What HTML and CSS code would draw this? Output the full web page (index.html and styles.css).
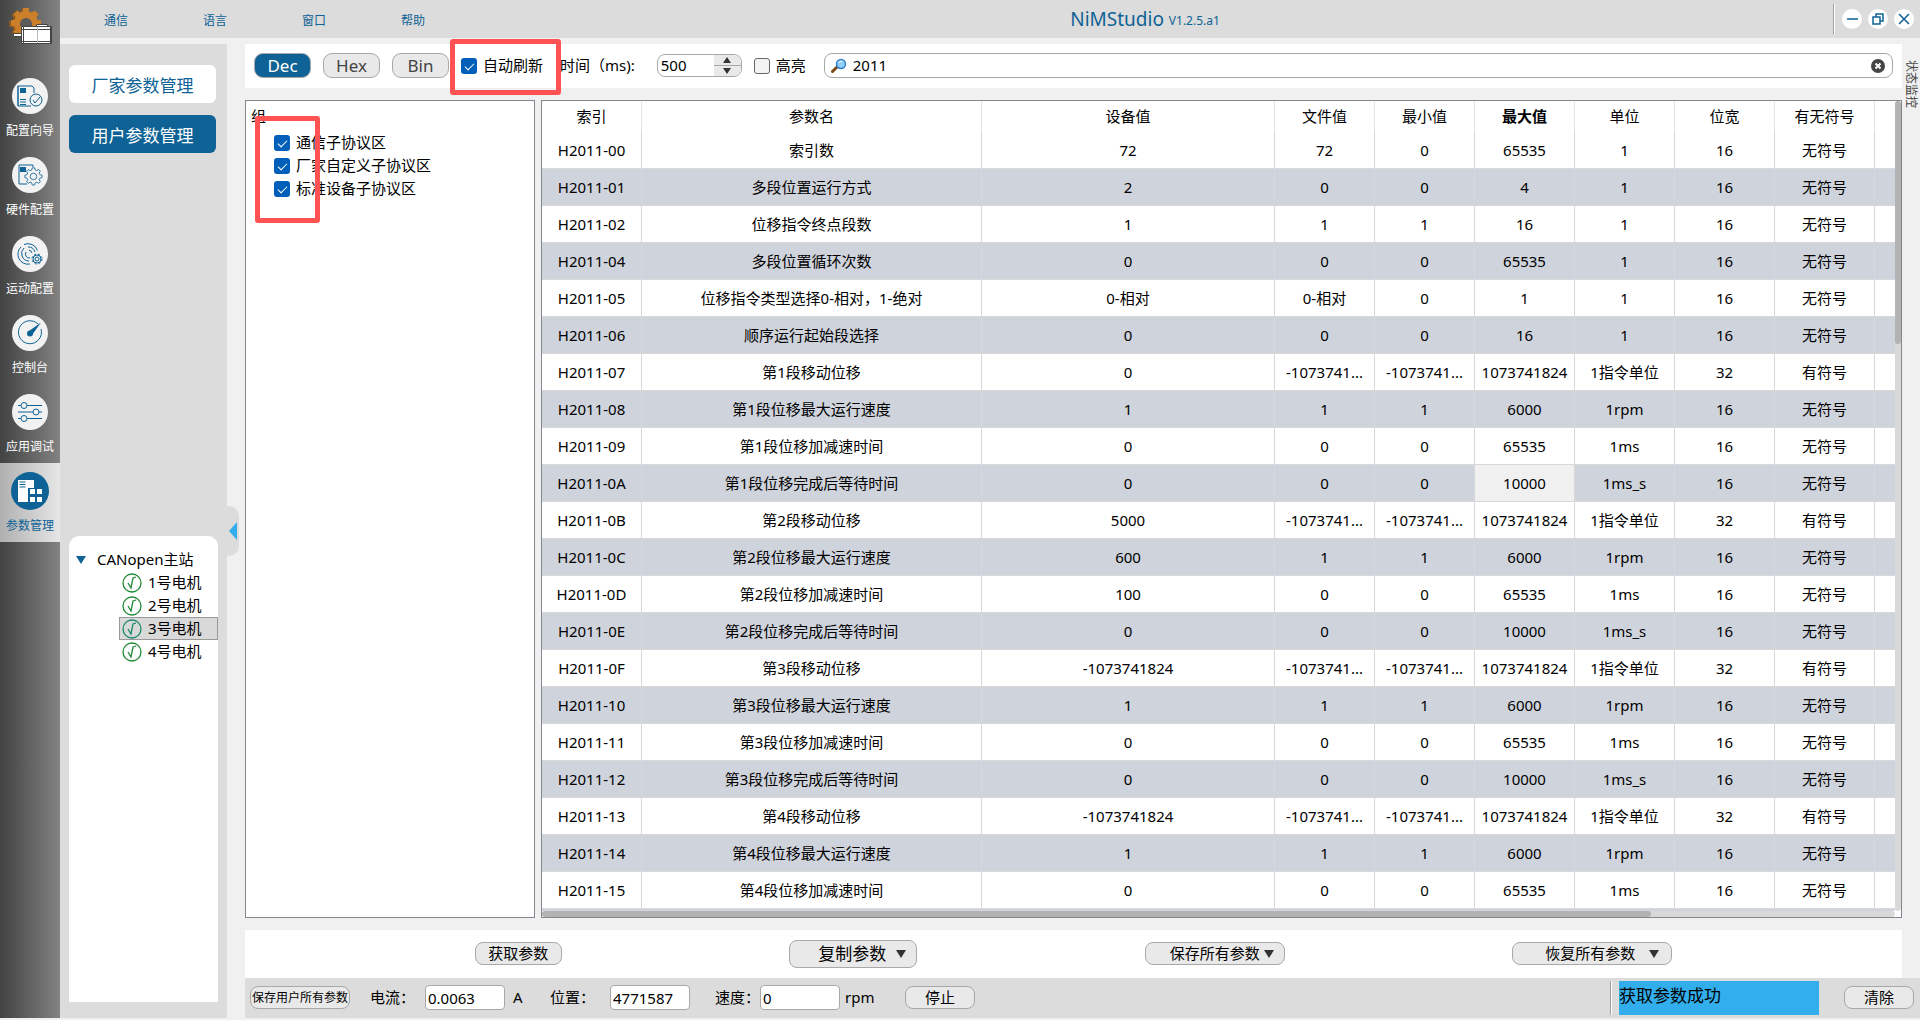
FILE: index.html
```html
<!DOCTYPE html>
<html lang="zh-CN">
<head>
    <meta charset="UTF-8">
    <meta name="viewport" content="width=device-width, initial-scale=1.0">
    <title>NiMStudio</title>
    <link rel="stylesheet" href="styles.css">
</head>
<body>
    <!-- Sidebar -->
    <nav class="sidebar">
        <svg class="logo" viewBox="0 0 46 40">
            <g fill="#8f5a1c" transform="translate(-2 1)">
                <circle cx="18" cy="15" r="12"/>
                <path d="M15 0h6v30h-6zM3 12h30v6H3z"/>
                <path d="M15 0h6v30h-6zM3 12h30v6H3z" transform="rotate(45 18 15)"/>
            </g>
            <g fill="#cb7f2b">
                <circle cx="18" cy="15" r="12"/>
                <path d="M15 0h6v30h-6zM3 12h30v6H3z"/>
                <path d="M15 0h6v30h-6zM3 12h30v6H3z" transform="rotate(45 18 15)"/>
            </g>
            <circle cx="18" cy="16" r="6" fill="#5a5a5a"/>
            <g fill="#fff" stroke="#444">
                <path d="M5.500 25.500h8v3h-8zM28.500 16.500h11v2h-11z"/>
                <path d="M13.500 18.500h30v17h-30z"/>
                <path d="M15.500 18.500v17M42.500 18.500v17M13.500 21.500h30M13.500 33.500h30" fill="none"/>
                <path d="M29.500 19v16" fill="none" stroke="#bbb"/>
            </g>
        </svg>
        <a class="nav-item" href="#">
            <svg viewBox="0 0 38 38">
                <circle class="disc" cx="19" cy="19" r="18"/>
                <path d="M23 16v-5l-2-2H7v20h13M7 9v20"/>
                <path class="solid" d="M9 11h6v5H9z"/>
                <path d="M9 22.500h6M9 25h6M9 27.500h6"/>
                <circle cx="25" cy="23" r="6"/>
                <path d="M22 23l2 3 5-6"/>
            </svg>
            <span>配置向导</span>
        </a>
        <a class="nav-item" href="#">
            <svg viewBox="0 0 38 38">
                <circle class="disc" cx="19" cy="19" r="18"/>
                <path d="M22 11V9H8v19h8"/>
                <path class="solid" d="M9 11h6v5H9z"/>
                <g transform="translate(4 2) scale(.82)">
                    <path class="gear" d="M21 12h3l.6 2.600 2 .8 2.300-1.400 2 2-1.400 2.300.8 2 2.700.7v3l-2.700.6-.8 2 1.400 2.300-2 2-2.300-1.400-2 .8L24 33h-3l-.6-2.700-2-.8-2.300 1.400-2-2 1.400-2.300-.8-2L12 24v-3l2.700-.7.8-2-1.400-2.300 2-2 2.300 1.400 2-.8z"/>
                    <circle cx="22.500" cy="22.500" r="4"/>
                </g>
            </svg>
            <span>硬件配置</span>
        </a>
        <a class="nav-item" href="#">
            <svg viewBox="0 0 38 38">
                <circle class="disc" cx="19" cy="19" r="18"/>
                <path d="M13 9.500a10 10 0 0 1 13.500 6M10 12a10 10 0 0 0 9 17M17 12a7 7 0 0 1 7 5M13 13a7.500 7.500 0 0 0 5 13M18 15a4 4 0 0 1 3 3M15 17a4 4 0 0 0 4 6"/>
                <circle cx="26" cy="24" r="5" stroke-dasharray="2 2"/>
                <circle cx="26" cy="24" r="4"/>
                <circle cx="26" cy="24" r="2"/>
            </svg>
            <span>运动配置</span>
        </a>
        <a class="nav-item" href="#">
            <svg viewBox="0 0 38 38">
                <circle class="disc" cx="19" cy="19" r="18"/>
                <path d="M27 10a11.500 11.500 0 1 0 3 5"/>
                <circle class="solid" cx="19" cy="19.500" r="3"/>
                <path class="solid" d="M18 17L30 8.500 21 21z"/>
            </svg>
            <span>控制台</span>
        </a>
        <a class="nav-item" href="#">
            <svg viewBox="0 0 38 38">
                <circle class="disc" cx="19" cy="19" r="18"/>
                <path d="M7 12.500h3M16 12.500h15M7 19h15M28 19h3M7 25.500h3M16 25.500h15"/>
                <circle cx="13" cy="12.500" r="3"/>
                <circle cx="25" cy="19" r="3"/>
                <circle cx="13" cy="25.500" r="3"/>
            </svg>
            <span>应用调试</span>
        </a>
        <a class="nav-item active" href="#">
            <svg viewBox="0 0 38 38">
                <circle class="disc" cx="19" cy="19" r="19"/>
                <path class="white" d="M7 8h16v8h-6v14H7z"/>
                <path d="M8.500 10h6M8.500 12.500h6M8.500 15h6"/>
                <path class="white" d="M19 17h5v5h-5zM26 17h5v5h-5zM19 25h5v5h-5zM26 25h5v5h-5z"/>
            </svg>
            <span>参数管理</span>
        </a>
    </nav>

    <div class="app">
        <!-- Title bar -->
        <header class="topbar">
            <div class="menu">
                <a href="#">通信</a>
                <a href="#">语言</a>
                <a href="#">窗口</a>
                <a href="#">帮助</a>
            </div>
            <h1>NiMStudio <small>V1.2.5.a1</small></h1>
            <div class="window-buttons">
                <button type="button" aria-label="最小化"><svg viewBox="0 0 20 20"><path d="M5 10h11"/></svg></button>
                <button type="button" aria-label="还原"><svg viewBox="0 0 20 20"><path d="M5 8h7v7H5zM8 8V5h7v7h-3"/></svg></button>
                <button type="button" aria-label="关闭"><svg viewBox="0 0 20 20"><path d="M5 5l10 10M15 5L5 15"/></svg></button>
            </div>
        </header>

        <div class="workspace">
            <aside class="side-panel">
                <button type="button" class="page-button">厂家参数管理</button>
                <button type="button" class="page-button selected">用户参数管理</button>
                <div class="device-tree">
                    <div class="tree-root"><span class="arrow-down"></span>CANopen主站</div>
                    <ul>
                        <li><svg viewBox="0 0 20 20"><circle cx="10" cy="10" r="9"/><path d="M6 10l3 5 2-10 3-1"/></svg>1号电机</li>
                        <li><svg viewBox="0 0 20 20"><circle cx="10" cy="10" r="9"/><path d="M6 10l3 5 2-10 3-1"/></svg>2号电机</li>
                        <li class="current"><svg viewBox="0 0 20 20"><circle cx="10" cy="10" r="9"/><path d="M6 10l3 5 2-10 3-1"/></svg>3号电机</li>
                        <li><svg viewBox="0 0 20 20"><circle cx="10" cy="10" r="9"/><path d="M6 10l3 5 2-10 3-1"/></svg>4号电机</li>
                    </ul>
                </div>
            </aside>
            <div class="splitter">
                <button type="button" class="collapse" aria-label="收起"></button>
            </div>

            <div class="content">
                <main class="main">
                    <form class="toolbar">
                        <button type="button" class="pill selected">Dec</button>
                        <button type="button" class="pill">Hex</button>
                        <button type="button" class="pill">Bin</button>
                        <label class="check auto"><input type="checkbox" checked>自动刷新<span class="mark mark-auto"></span></label>
                        <label class="interval" for="interval">时间（ms):</label>
                        <span class="spin">
                            <input type="text" id="interval" value="500">
                            <span class="spin-buttons">
                                <button type="button" aria-label="增加"><i class="arrow-up"></i></button>
                                <button type="button" aria-label="减少"><i class="arrow-down"></i></button>
                            </span>
                        </span>
                        <label class="check"><input type="checkbox">高亮</label>
                        <span class="search">
                            <svg viewBox="0 0 16 16">
                                <path d="M6 9l-4.500 4.500" stroke="#7b4a16" stroke-width="3" stroke-linecap="round"/>
                                <circle cx="10" cy="6" r="4.500" fill="#8fd0fb" stroke="#2f7fcb" stroke-width="1.500"/>
                                <path d="M7.500 5a3 3 0 0 1 4-1.500" stroke="#fff" fill="none"/>
                            </svg>
                            <input type="text" value="2011" aria-label="搜索">
                            <button type="button" aria-label="清空"><svg viewBox="0 0 14 14"><circle cx="7" cy="7" r="7" fill="#444"/><path d="M4.500 4.500l5 5M9.500 4.500l-5 5" stroke="#fff" stroke-width="2"/></svg></button>
                        </span>
                    </form>

                    <div class="panels">
                        <section class="groups">
                            <h2>组</h2>
                            <label class="check"><input type="checkbox" checked>通信子协议区</label>
                            <label class="check"><input type="checkbox" checked>厂家自定义子协议区</label>
                            <label class="check"><input type="checkbox" checked>标准设备子协议区</label>
                            <span class="mark mark-groups"></span>
                        </section>

                        <section class="params">
                            <div class="table-view">
                                <table>
                                    <colgroup>
                                        <col class="c-index"><col class="c-name"><col><col class="c-num"><col class="c-num"><col class="c-num"><col class="c-num"><col class="c-num"><col class="c-num"><col class="c-rest">
                                    </colgroup>
                                    <thead>
                                        <tr><th>索引</th><th>参数名</th><th>设备值</th><th>文件值</th><th>最小值</th><th class="sorted">最大值</th><th>单位</th><th>位宽</th><th>有无符号</th><th></th></tr>
                                    </thead>
                                    <tbody>
                                        <tr><td>H2011-00</td><td>索引数</td><td>72</td><td>72</td><td>0</td><td>65535</td><td>1</td><td>16</td><td>无符号</td><td></td></tr>
                                        <tr><td>H2011-01</td><td>多段位置运行方式</td><td>2</td><td>0</td><td>0</td><td>4</td><td>1</td><td>16</td><td>无符号</td><td></td></tr>
                                        <tr><td>H2011-02</td><td>位移指令终点段数</td><td>1</td><td>1</td><td>1</td><td>16</td><td>1</td><td>16</td><td>无符号</td><td></td></tr>
                                        <tr><td>H2011-04</td><td>多段位置循环次数</td><td>0</td><td>0</td><td>0</td><td>65535</td><td>1</td><td>16</td><td>无符号</td><td></td></tr>
                                        <tr><td>H2011-05</td><td>位移指令类型选择0-相对，1-绝对</td><td>0-相对</td><td>0-相对</td><td>0</td><td>1</td><td>1</td><td>16</td><td>无符号</td><td></td></tr>
                                        <tr><td>H2011-06</td><td>顺序运行起始段选择</td><td>0</td><td>0</td><td>0</td><td>16</td><td>1</td><td>16</td><td>无符号</td><td></td></tr>
                                        <tr><td>H2011-07</td><td>第1段移动位移</td><td>0</td><td>-1073741...</td><td>-1073741...</td><td>1073741824</td><td>1指令单位</td><td>32</td><td>有符号</td><td></td></tr>
                                        <tr><td>H2011-08</td><td>第1段位移最大运行速度</td><td>1</td><td>1</td><td>1</td><td>6000</td><td>1rpm</td><td>16</td><td>无符号</td><td></td></tr>
                                        <tr><td>H2011-09</td><td>第1段位移加减速时间</td><td>0</td><td>0</td><td>0</td><td>65535</td><td>1ms</td><td>16</td><td>无符号</td><td></td></tr>
                                        <tr><td>H2011-0A</td><td>第1段位移完成后等待时间</td><td>0</td><td>0</td><td>0</td><td class="focus">10000</td><td>1ms_s</td><td>16</td><td>无符号</td><td></td></tr>
                                        <tr><td>H2011-0B</td><td>第2段移动位移</td><td>5000</td><td>-1073741...</td><td>-1073741...</td><td>1073741824</td><td>1指令单位</td><td>32</td><td>有符号</td><td></td></tr>
                                        <tr><td>H2011-0C</td><td>第2段位移最大运行速度</td><td>600</td><td>1</td><td>1</td><td>6000</td><td>1rpm</td><td>16</td><td>无符号</td><td></td></tr>
                                        <tr><td>H2011-0D</td><td>第2段位移加减速时间</td><td>100</td><td>0</td><td>0</td><td>65535</td><td>1ms</td><td>16</td><td>无符号</td><td></td></tr>
                                        <tr><td>H2011-0E</td><td>第2段位移完成后等待时间</td><td>0</td><td>0</td><td>0</td><td>10000</td><td>1ms_s</td><td>16</td><td>无符号</td><td></td></tr>
                                        <tr><td>H2011-0F</td><td>第3段移动位移</td><td>-1073741824</td><td>-1073741...</td><td>-1073741...</td><td>1073741824</td><td>1指令单位</td><td>32</td><td>有符号</td><td></td></tr>
                                        <tr><td>H2011-10</td><td>第3段位移最大运行速度</td><td>1</td><td>1</td><td>1</td><td>6000</td><td>1rpm</td><td>16</td><td>无符号</td><td></td></tr>
                                        <tr><td>H2011-11</td><td>第3段位移加减速时间</td><td>0</td><td>0</td><td>0</td><td>65535</td><td>1ms</td><td>16</td><td>无符号</td><td></td></tr>
                                        <tr><td>H2011-12</td><td>第3段位移完成后等待时间</td><td>0</td><td>0</td><td>0</td><td>10000</td><td>1ms_s</td><td>16</td><td>无符号</td><td></td></tr>
                                        <tr><td>H2011-13</td><td>第4段移动位移</td><td>-1073741824</td><td>-1073741...</td><td>-1073741...</td><td>1073741824</td><td>1指令单位</td><td>32</td><td>有符号</td><td></td></tr>
                                        <tr><td>H2011-14</td><td>第4段位移最大运行速度</td><td>1</td><td>1</td><td>1</td><td>6000</td><td>1rpm</td><td>16</td><td>无符号</td><td></td></tr>
                                        <tr><td>H2011-15</td><td>第4段位移加减速时间</td><td>0</td><td>0</td><td>0</td><td>65535</td><td>1ms</td><td>16</td><td>无符号</td><td></td></tr>
                                        <tr><td></td><td></td><td></td><td></td><td></td><td></td><td></td><td></td><td></td><td></td></tr>
                                    </tbody>
                                </table>
                            </div>
                            <div class="scroll-y"><div class="thumb"></div></div>
                            <div class="scroll-x"><div class="thumb"></div></div>
                        </section>
                    </div>

                    <div class="actions">
                        <button type="button" class="button">获取参数</button>
                        <button type="button" class="button large">复制参数<i class="arrow-down"></i></button>
                        <button type="button" class="button save">保存所有参数<i class="arrow-down"></i></button>
                        <button type="button" class="button restore">恢复所有参数<i class="arrow-down"></i></button>
                    </div>
                </main>
                <div class="dock"><button type="button">状态监控</button></div>

                <!-- Status bar -->
                <footer class="statusbar">
                    <button type="button" class="button small">保存用户所有参数</button>
                    <span class="field"><label for="current">电流：</label><input type="text" id="current" value="0.0063"><span class="unit">A</span></span>
                    <span class="field position"><label for="position">位置：</label><input type="text" id="position" value="4771587"></span>
                    <span class="field speed"><label for="speed">速度：</label><input type="text" id="speed" value="0"><span class="unit">rpm</span></span>
                    <button type="button" class="button stop">停止</button>
                    <div class="message-area">
                        <output class="message">获取参数成功</output>
                        <button type="button" class="button stop">清除</button>
                    </div>
                </footer>
            </div>
        </div>
    </div>
</body>
</html>
```
FILE: styles.css
```css
* {
    box-sizing: border-box;
}
body {
    display: flex;
    height: 100vh;
    min-width: 1280px;
    margin: 0;
    padding-bottom: 2px;
    overflow: hidden;
    background: #f0f0f0;
    color: #000;
    font-family: "Noto Sans", "Noto Sans CJK SC", sans-serif;
    font-size: 15px;
    line-height: 23px;
}
button, input {
    margin: 0;
    padding: 0;
    font: inherit;
    color: inherit;
}
button {
    cursor: pointer;
}
a {
    color: #0e6295;
    text-decoration: none;
}

/* Sidebar */
.sidebar {
    flex: none;
    width: 60px;
    background: linear-gradient(to right, #424242, #828282);
}
.logo {
    display: block;
    width: 46px;
    height: 40px;
    margin: 8px 0 20px 8px;
}
.nav-item {
    display: flex;
    flex-direction: column;
    align-items: center;
    gap: 6px;
    height: 79px;
    padding-top: 9px;
    color: #fff;
    font-size: 12px;
    line-height: 20px;
}
.nav-item svg {
    width: 38px;
    height: 38px;
    fill: none;
    stroke: #0e6295;
}
.nav-item .disc {
    fill: #f2f2f2;
    stroke: none;
}
.nav-item .solid {
    fill: #0e6295;
    stroke: none;
}
.nav-item .white {
    fill: #fff;
    stroke: none;
}
.nav-item .gear {
    fill: #f2f2f2;
}
.nav-item.active {
    background: linear-gradient(to right, #b0b0b0, #e6e6e6);
    color: #0e6295;
}
.nav-item.active .disc {
    fill: #0e6295;
}

/* Title bar */
.app {
    display: flex;
    flex: 1;
    flex-direction: column;
    gap: 6px;
    min-width: 0;
}
.topbar {
    display: flex;
    align-items: center;
    height: 38px;
    padding-right: 6px;
    background: #dcdcdc;
    color: #0e6295;
}
.menu {
    display: flex;
    gap: 75px;
    padding: 2px 32px 0 44px;
    font-size: 12px;
}
.topbar h1 {
    flex: 1;
    margin: 0;
    padding-top: 2px;
    font-size: 19px;
    font-weight: 400;
    text-align: center;
}
.topbar small {
    font-size: 12px;
    vertical-align: 1px;
}
.window-buttons {
    display: flex;
    align-items: center;
    gap: 6px;
    height: 30px;
    padding-left: 8px;
    border-left: 1px solid #a0a0a0;
    box-shadow: inset 1px 0 #fff;
}
.window-buttons button {
    width: 20px;
    height: 20px;
    border: 0;
    border-radius: 50%;
    background: #fff;
}
.window-buttons svg {
    display: block;
    fill: none;
    stroke: #0e6295;
    stroke-width: 1.5;
}

/* Left panel */
.workspace {
    display: flex;
    flex: 1;
    min-height: 0;
}
.side-panel {
    display: flex;
    flex: none;
    flex-direction: column;
    gap: 12px;
    width: 167px;
    padding: 21px 9px 16px;
    background: #dcdcdc;
}
.page-button {
    width: 147px;
    height: 38px;
    padding-top: 2px;
    border: 0;
    border-radius: 6px;
    background: #fff;
    color: #0e6295;
    font-size: 17px;
}
.page-button.selected {
    background: #0e6295;
    color: #fff;
}
.device-tree {
    height: 466px;
    margin-top: auto;
    padding-top: 12px;
    border-radius: 10px 10px 0 0;
    background: #fff;
}
.tree-root {
    display: flex;
    align-items: center;
    gap: 11px;
    padding-left: 7px;
}
.tree-root .arrow-down {
    border-top-color: #0e6295;
}
.device-tree ul {
    margin: 0;
    padding: 0 0 0 50px;
    list-style: none;
}
.device-tree li {
    display: flex;
    align-items: center;
    gap: 6px;
    height: 23px;
    padding-left: 2px;
    border: 1px solid transparent;
}
.device-tree li.current {
    border-color: #999;
    background: #d9d9d9;
}
.device-tree svg {
    width: 20px;
    height: 20px;
    fill: none;
    stroke: #1f8a35;
    stroke-width: 1.3;
}
.device-tree .current svg {
    stroke: #1b8a6b;
}
.splitter {
    display: flex;
    flex: none;
    align-items: center;
    width: 18px;
}
.collapse {
    width: 12px;
    height: 50px;
    border: 0;
    border-radius: 0 10px 10px 0;
    background: #dcdcdc;
}
.collapse::before {
    content: "";
    display: block;
    width: 8px;
    height: 18px;
    margin-left: 2px;
    background: #33aeec;
    clip-path: polygon(100% 0, 0 50%, 100% 100%);
}

/* Main area */
.content {
    display: grid;
    flex: 1;
    grid-template-columns: 1fr 18px;
    grid-template-rows: 1fr 40px;
    min-width: 0;
    min-height: 0;
}
.main {
    display: flex;
    flex-direction: column;
    gap: 12px;
    min-width: 0;
    min-height: 0;
}
.toolbar {
    display: flex;
    flex: none;
    align-items: center;
    height: 44px;
    padding: 0 9px 1px;
    background: #fff;
}
.pill {
    width: 57px;
    height: 25px;
    margin-right: 12px;
    border: 1px solid #a8a8a8;
    border-radius: 9px;
    background: #e9e9e9;
    color: #444;
    font-size: 17px;
    line-height: 22px;
}
.pill.selected {
    background: #0e6295;
    color: #fff;
}
.check {
    display: flex;
    align-items: center;
    gap: 6px;
}
.check input {
    flex: none;
    width: 16px;
    height: 16px;
    border: 1px solid #666;
    border-radius: 3px;
    appearance: none;
    background: #f3f3f3;
}
.check input:checked {
    border: 0;
    background: #005fb8;
}
.check input:checked::before {
    content: "";
    display: block;
    width: 8px;
    height: 4px;
    margin: 5px 4px;
    border: solid #fff;
    border-width: 0 0 1px 1px;
    transform: rotate(-45deg);
}
.auto {
    position: relative;
}
.interval {
    margin: 0 22px 0 17px;
}
.mark {
    position: absolute;
    border: 5px solid #ff5252;
    border-radius: 3px;
    pointer-events: none;
}
.mark-auto {
    top: -15px;
    left: -11px;
    width: 111px;
    height: 56px;
}
.mark-groups {
    top: 15px;
    left: 9px;
    width: 65px;
    height: 107px;
}
.spin {
    display: flex;
    width: 85px;
    height: 23px;
    margin-right: 12px;
    overflow: hidden;
    border: 1px solid #a8a8a8;
    border-radius: 8px;
}
.spin input {
    flex: 1;
    min-width: 0;
    padding-left: 3px;
    border: 0;
    background: none;
}
.spin-buttons {
    display: flex;
    flex-direction: column;
    width: 27px;
    background: #e9e9e9;
}
.spin-buttons button {
    display: flex;
    flex: 1;
    align-items: center;
    justify-content: center;
    border: 0;
    background: none;
}
.spin-buttons button:last-child {
    border-top: 1px solid #a8a8a8;
}
.arrow-down, .arrow-up {
    border: solid transparent;
    border-width: 0 5px;
}
.arrow-down {
    border-top: 8px solid #333;
}
.arrow-up {
    border-bottom: 6px solid #333;
}
.spin .arrow-up, .spin .arrow-down {
    border-right-width: 4px;
    border-left-width: 4px;
}
.spin .arrow-down {
    border-top-width: 6px;
}
.search {
    display: flex;
    flex: 1;
    align-items: center;
    height: 25px;
    margin-left: 18px;
    padding: 0 7px 0 6px;
    border: 1px solid #a8a8a8;
    border-radius: 8px;
}
.search svg {
    display: block;
    width: 16px;
    height: 16px;
}
.search input {
    flex: 1;
    height: 23px;
    padding-left: 6px;
    border: 0;
    background: none;
}
.search button {
    border: 0;
    background: none;
}
.search button svg {
    width: 14px;
    height: 14px;
}
input:focus {
    outline: none;
}
.panels {
    display: flex;
    flex: 1;
    gap: 6px;
    min-height: 0;
}
.groups, .params {
    border: 1px solid #828790;
    background: #fff;
}
.groups {
    position: relative;
    flex: none;
    width: 290px;
}
.groups h2 {
    margin: 0;
    padding: 4px 5px 3px;
    font-size: 15px;
    font-weight: 400;
}
.groups .check {
    height: 23px;
    padding-left: 28px;
}

/* Parameter table */
.params {
    display: grid;
    flex: 1;
    grid-template-columns: 1fr 6px;
    grid-template-rows: 1fr 6px;
    min-width: 0;
}
.table-view {
    min-width: 0;
    min-height: 0;
    overflow: hidden;
}
table {
    width: 100%;
    border-collapse: separate;
    border-spacing: 0;
    table-layout: fixed;
}
th, td {
    overflow: hidden;
    padding: 0;
    border-right: 1px solid #d8d8d8;
    text-align: center;
    white-space: nowrap;
}
th {
    height: 31px;
    border-color: #e5e5e5;
    font-weight: 400;
}
th.sorted {
    font-weight: 700;
}
td {
    height: 37px;
    border-bottom: 1px solid #d8d8d8;
}
th:last-child, td:last-child {
    border-right: 0;
}
tbody tr:nth-child(even) {
    background: #cfd3dc;
}
td.focus {
    background: #f0f0f0;
}
.c-index, .c-num {
    width: 100px;
}
.c-name {
    width: 340px;
}
.c-rest {
    width: 20px;
}
.scroll-y, .scroll-x {
    border-radius: 3px;
    background: #d9d9d9;
}
.scroll-y .thumb {
    height: 30%;
    border-radius: 3px;
    background: #b3b3b3;
}
.scroll-x .thumb {
    width: 82%;
    height: 6px;
    border-radius: 3px;
    background: #b3b3b3;
}

/* Bottom buttons */
.actions {
    display: flex;
    flex: none;
    align-items: center;
    justify-content: space-around;
    height: 48px;
    padding: 0 116px 1px;
    background: #fff;
}
.button {
    display: flex;
    align-items: center;
    justify-content: center;
    width: 87px;
    height: 23px;
    border: 1px solid #a8a8a8;
    border-radius: 8px;
    background: #e9e9e9;
    white-space: nowrap;
}
.button.large {
    gap: 10px;
    width: 128px;
    height: 28px;
    padding-left: 18px;
    font-size: 17px;
}
.button.save {
    gap: 4px;
    width: 140px;
    padding-left: 14px;
}
.button.restore {
    gap: 14px;
    width: 160px;
    padding-left: 20px;
}
.dock button {
    width: 18px;
    height: 80px;
    padding: 0;
    border: 0;
    background: none;
    color: #444;
    font-size: 12px;
    line-height: 18px;
    writing-mode: vertical-rl;
    text-orientation: sideways;
}

/* Status bar */
.statusbar {
    display: flex;
    grid-column: 1 / 3;
    align-items: center;
    padding: 0 6px 1px 5px;
    background: #dcdcdc;
}
.button.small {
    width: 100px;
    font-size: 12px;
}
.field {
    display: flex;
    align-items: center;
    margin-left: 20px;
}
.field label {
    width: 55px;
}
.position label {
    width: 60px;
}
.speed {
    margin-left: 25px;
}
.speed label {
    width: 45px;
}
.field input {
    width: 80px;
    height: 25px;
    padding-left: 2px;
    border: 1px solid #a8a8a8;
    border-radius: 4px;
    background: #fff;
}
.unit {
    min-width: 25px;
    padding-left: 8px;
}
.speed .unit {
    width: 40px;
    padding-left: 5px;
}
.button.stop {
    width: 70px;
}
.statusbar > .stop {
    margin-left: 25px;
}
.message-area {
    display: flex;
    align-items: center;
    height: 34px;
    margin-left: auto;
    padding-left: 8px;
    border-left: 1px solid #a0a0a0;
    box-shadow: inset 1px 0 #fff;
}
.message {
    width: 200px;
    height: 34px;
    margin-right: 25px;
    padding-top: 3px;
    background: #33aeec;
    font-size: 17px;
}
```
